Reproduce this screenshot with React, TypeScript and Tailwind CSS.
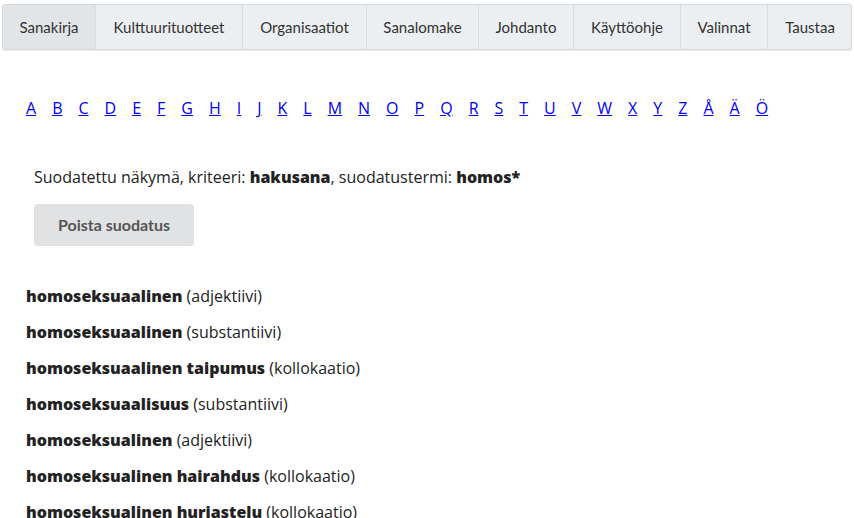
const tabs = [
  { label: "Sanakirja", w: "w-[93px]", active: true },
  { label: "Kulttuurituotteet", w: "w-[147px]" },
  { label: "Organisaatiot", w: "w-[124px]" },
  { label: "Sanalomake", w: "w-[112px]" },
  { label: "Johdanto", w: "w-[95px]" },
  { label: "Käyttöohje", w: "w-[107px]" },
  { label: "Valinnat", w: "w-[87px]" },
  { label: "Taustaa", w: "w-[84px]" },
];

const letters = "ABCDEFGHIJKLMNOPQRSTUVWXYZÅÄÖ".split("");

const entries = [
  { word: "homoseksuaalinen", kind: "adjektiivi" },
  { word: "homoseksuaalinen", kind: "substantiivi" },
  { word: "homoseksuaalinen taipumus", kind: "kollokaatio" },
  { word: "homoseksuaalisuus", kind: "substantiivi" },
  { word: "homoseksualinen", kind: "adjektiivi" },
  { word: "homoseksualinen hairahdus", kind: "kollokaatio" },
  { word: "homoseksualinen hurjastelu", kind: "kollokaatio" },
];

export default function App() {
  return (
    <div className="h-[518px] overflow-hidden bg-white font-['Open_Sans',sans-serif] text-[#222]">
      <div className="pl-[2px] pr-[2px] pt-[4px]">
        <div className="flex h-[46px] overflow-hidden rounded-[3px] border border-[#d6d9db] bg-[#eceff1] shadow-[0_1px_1px_rgba(0,0,0,0.08)]">
          {tabs.map((t, i) => (
            <div
              key={t.label}
              className={`flex shrink-0 items-center justify-center font-['Lato',sans-serif] text-[15px] text-[#333] ${t.w} ${
                i < tabs.length - 1 ? "border-r border-[#d9dcde]" : ""
              } ${t.active ? "bg-[#e2e5e7]" : ""}`}
            >
              {t.label}
            </div>
          ))}
        </div>
      </div>

      <div className="mt-[47px] flex gap-[16px] pl-[26px] text-[16px] leading-[22px]">
        {letters.map((l) => (
          <a key={l} href="#" className="text-[#0000ee] underline">
            {l}
          </a>
        ))}
      </div>

      <div className="mt-[47px] pl-[34px]">
        <p className="text-[16px] leading-[22px]">
          Suodatettu näkymä, kriteeri: <b className="font-extrabold">hakusana</b>, suodatustermi:{" "}
          <b className="font-extrabold">homos*</b>
        </p>
        <button className="mt-[16px] h-[42px] w-[160px] rounded-[4px] bg-[#e1e2e4] font-['Lato',sans-serif] text-[16px] font-bold text-[#555]">
          Poista suodatus
        </button>
      </div>

      <div className="mt-[39px] flex flex-col gap-[14px] pl-[26px]">
        {entries.map((e, i) => (
          <div key={i} className="text-[16px] leading-[22px]">
            <b className="font-extrabold">{e.word}</b> ({e.kind})
          </div>
        ))}
      </div>
    </div>
  );
}
